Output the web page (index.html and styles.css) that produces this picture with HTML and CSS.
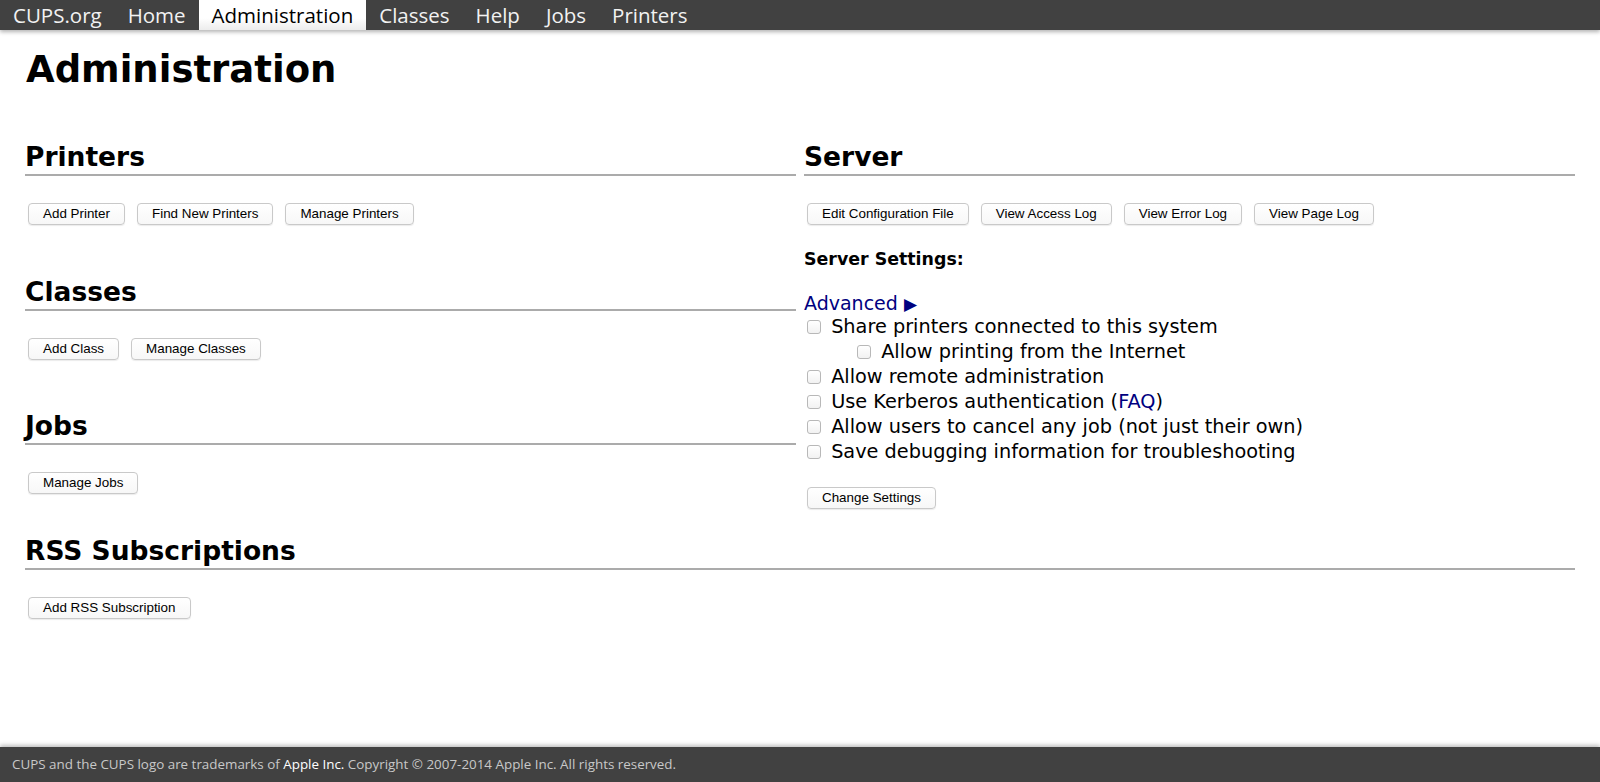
FILE: index.html
```html
<!DOCTYPE html>
<html lang="en">
<head>
<meta charset="utf-8">
<title>Administration - CUPS</title>
<link rel="stylesheet" href="styles.css">
</head>
<body>
<nav class="topbar">
  <a class="tab" href="#">CUPS.org</a>
  <a class="tab" href="#">Home</a>
  <a class="tab active" href="#">Administration</a>
  <a class="tab" href="#">Classes</a>
  <a class="tab" href="#">Help</a>
  <a class="tab" href="#">Jobs</a>
  <a class="tab" href="#">Printers</a>
</nav>

<main class="page">
  <h1 class="title">Administration</h1>

  <div class="columns">
    <div class="col">
      <section class="section">
        <h2 class="heading">Printers</h2>
        <div class="buttons">
          <button class="btn">Add Printer</button>
          <button class="btn">Find New Printers</button>
          <button class="btn">Manage Printers</button>
        </div>
      </section>
      <section class="section">
        <h2 class="heading">Classes</h2>
        <div class="buttons">
          <button class="btn">Add Class</button>
          <button class="btn">Manage Classes</button>
        </div>
      </section>
      <section class="section">
        <h2 class="heading">Jobs</h2>
        <div class="buttons">
          <button class="btn">Manage Jobs</button>
        </div>
      </section>
    </div>

    <div class="col">
      <section class="section">
        <h2 class="heading">Server</h2>
        <div class="buttons">
          <button class="btn">Edit Configuration File</button>
          <button class="btn">View Access Log</button>
          <button class="btn">View Error Log</button>
          <button class="btn">View Page Log</button>
        </div>
        <p class="settings-title">Server Settings:</p>
        <a class="advanced" href="#">Advanced <span class="arrow">&#9654;</span></a>
        <label class="check"><input type="checkbox" class="box"> Share printers connected to this system</label>
        <label class="check sub"><input type="checkbox" class="box"> Allow printing from the Internet</label>
        <label class="check"><input type="checkbox" class="box"> Allow remote administration</label>
        <label class="check"><input type="checkbox" class="box"> Use Kerberos authentication (<a class="link" href="#">FAQ</a>)</label>
        <label class="check"><input type="checkbox" class="box"> Allow users to cancel any job (not just their own)</label>
        <label class="check"><input type="checkbox" class="box"> Save debugging information for troubleshooting</label>
        <div class="buttons change">
          <button class="btn">Change Settings</button>
        </div>
      </section>
    </div>
  </div>

  <section class="section rss">
    <h2 class="heading">RSS Subscriptions</h2>
    <div class="buttons">
      <button class="btn">Add RSS Subscription</button>
    </div>
  </section>
</main>

<footer class="footer">
  CUPS and the CUPS logo are trademarks of <a class="footlink" href="#">Apple Inc.</a> Copyright &copy; 2007-2014 Apple Inc. All rights reserved.
</footer>
</body>
</html>
```

FILE: styles.css
```css
html, body {
  margin: 0;
  padding: 0;
}

body {
  min-height: 100vh;
  display: flex;
  flex-direction: column;
  background: #ffffff;
  color: #000000;
  font-family: "DejaVu Sans", "Liberation Sans", sans-serif;
}

.topbar {
  display: flex;
  height: 30px;
  background: #414141;
  box-shadow: 0 2px 4px rgba(0, 0, 0, 0.3);
  position: relative;
  z-index: 1;
}

.tab {
  display: block;
  padding: 0 13px;
  font-family: "Open Sans", sans-serif;
  font-size: 20.5px;
  line-height: 30px;
  color: #f2f2f2;
  text-decoration: none;
  white-space: nowrap;
}

.tab.active {
  background: linear-gradient(#ffffff 0%, #ffffff 60%, #ececec 100%);
  color: #000000;
}

.page {
  padding: 0 25px;
}

.title {
  margin: 18px 0 0 1px;
  font-size: 37px;
  line-height: 44px;
  font-weight: bold;
}

.columns {
  display: grid;
  grid-template-columns: 1fr 1fr;
  column-gap: 8px;
  margin-top: 49px;
}

.col {
  display: flex;
  flex-direction: column;
  gap: 50.5px;
}

.heading {
  margin: 0;
  font-size: 26.5px;
  line-height: 32px;
  font-weight: bold;
  padding-bottom: 1px;
  border-bottom: 2px solid #ababab;
}

.buttons {
  display: flex;
  gap: 12px;
  margin: 27px 0 0 3px;
}

.btn {
  font-family: "Liberation Sans", Arial, sans-serif;
  font-size: 13.4px;
  line-height: 16px;
  padding: 2px 14px;
  border: 1px solid #c9c9c9;
  border-radius: 4px;
  background: linear-gradient(#ffffff, #f7f7f7);
  box-shadow: 0 1px 1px rgba(0, 0, 0, 0.08);
  color: #000000;
}

.settings-title {
  margin: 22px 0 0 0;
  font-size: 17.4px;
  line-height: 24px;
  font-weight: bold;
}

.advanced {
  display: block;
  margin-top: 22px;
  font-size: 19px;
  line-height: 20px;
  color: #000080;
  text-decoration: none;
}

.arrow {
  font-size: 17px;
}

.check {
  display: flex;
  align-items: center;
  font-size: 19.3px;
  line-height: 25px;
  white-space: pre;
}

.check.sub {
  padding-left: 50px;
}

.box {
  appearance: none;
  -webkit-appearance: none;
  width: 14px;
  height: 14px;
  margin: 1px 4px 0 3px;
  border: 1px solid #b8b8b8;
  border-radius: 3px;
  background: linear-gradient(#ffffff, #f2f2f2);
  flex: none;
}

.link {
  color: #000080;
  text-decoration: none;
}

.buttons.change {
  margin-top: 23px;
}

.rss {
  margin-top: 26px;
}

.footer {
  margin-top: auto;
  height: 35px;
  background: #414141;
  box-shadow: 0 -2px 4px rgba(0, 0, 0, 0.25);
  padding: 0 12px;
  font-family: "Open Sans", sans-serif;
  font-size: 13.4px;
  line-height: 35px;
  color: #c8c8c8;
}

.footlink {
  color: #ffffff;
  text-decoration: none;
}
```
